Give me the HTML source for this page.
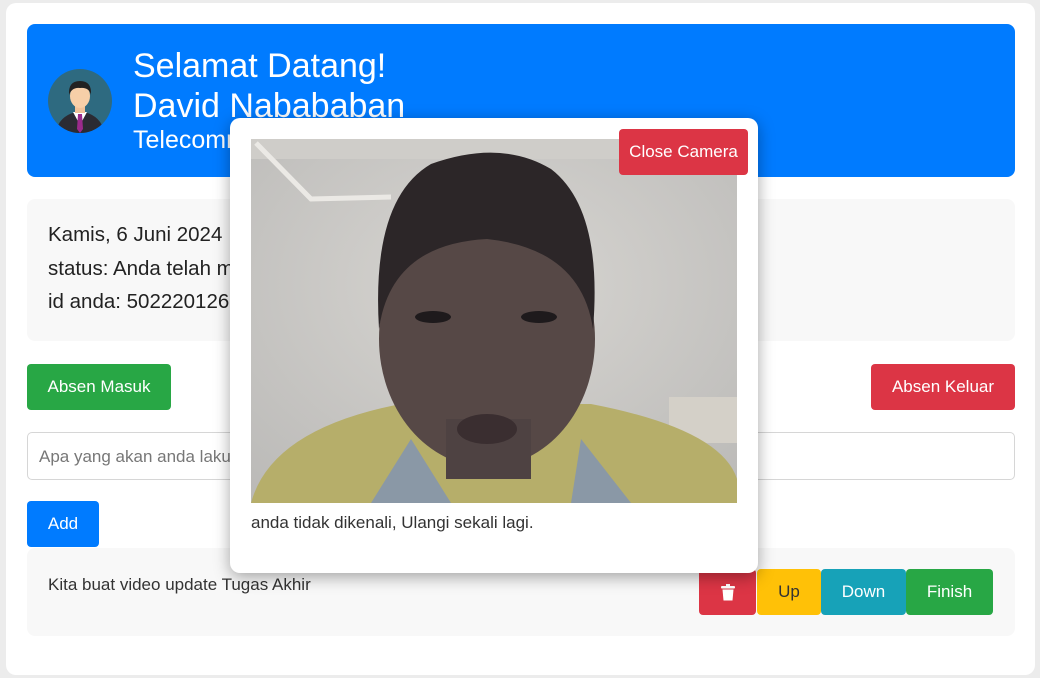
<!DOCTYPE html>
<html><head><meta charset="utf-8"><style>
*{box-sizing:border-box;margin:0;padding:0}
body{width:1040px;height:678px;background:#ececec;font-family:"Liberation Sans",sans-serif;position:relative;overflow:hidden}
.a{position:absolute}
.card{left:6px;top:3px;width:1029px;height:672px;background:#fff;border-radius:10px}
.btn{position:absolute;color:#fff;font-size:17px;display:flex;align-items:center;justify-content:center;border-radius:4px}
</style></head><body>
<div class="a card"></div>
<div class="a" style="left:27px;top:24px;width:988px;height:153px;background:#007bff;border-radius:8px"></div>
<svg class="a" style="left:48px;top:69px" width="64" height="64" viewBox="0 0 64 64">
<defs><clipPath id="c"><circle cx="32" cy="32" r="32"/></clipPath></defs>
<circle cx="32" cy="32" r="32" fill="#2e6a80"/>
<g clip-path="url(#c)">
<path d="M8 64 Q10 46 32 42 Q54 46 56 64Z" fill="#2b2b33"/>
<path d="M25 43 L32 56 L39 43Z" fill="#fff"/>
<path d="M30 45 L34 45 L35 60 L32 64 L29 60Z" fill="#9b2a8c"/>
<rect x="27" y="34" width="10" height="10" fill="#f0c29a"/>
<ellipse cx="32" cy="27" rx="10" ry="12" fill="#f7cfa8"/>
<path d="M21 26 Q20 12 32 12 Q44 12 43 26 Q41 18 32 19 Q24 18 21 26Z" fill="#222"/>
</g></svg>
<div class="a" style="left:133px;top:46px;color:#fff;font-size:34px;line-height:40px">Selamat Datang!<br>David Nabababan</div>
<div class="a" style="left:133px;top:126px;color:#fff;font-size:25px">Telecommunication</div>
<div class="a" style="left:27px;top:199px;width:988px;height:142px;background:#f8f8f8;border-radius:8px"></div>
<div class="a" style="left:48px;top:218px;font-size:20.5px;line-height:33.5px;color:#222">Kamis, 6 Juni 2024<br>status: Anda telah masuk<br>id anda: 5022201260000</div>
<div class="btn" style="left:27px;top:364px;width:144px;height:46px;background:#28a745">Absen Masuk</div>
<div class="btn" style="left:871px;top:364px;width:144px;height:46px;background:#dc3545">Absen Keluar</div>
<div class="a" style="left:27px;top:432px;width:988px;height:48px;border:1px solid #d6d6d6;border-radius:5px;font-size:17px;color:#777;padding:14px 11px">Apa yang akan anda lakukan hari ini?</div>
<div class="btn" style="left:27px;top:501px;width:72px;height:46px;background:#007bff">Add</div>
<div class="a" style="left:27px;top:548px;width:988px;height:88px;background:#f8f8f8;border-radius:8px"></div>
<div class="a" style="left:48px;top:575px;font-size:17px;color:#333">Kita buat video update Tugas Akhir</div>
<div class="btn" style="left:699px;top:569px;width:57px;height:46px;background:#dc3545"><svg width="14" height="17" viewBox="0 0 14 17"><rect x="0" y="2" width="14" height="2.5" rx="1" fill="#fff"/><rect x="5" y="0" width="4" height="3" fill="#fff"/><path d="M1.5 5.5H12.5L11.5 16.5H2.5Z" fill="#fff"/></svg></div>
<div class="btn" style="left:757px;top:569px;width:64px;height:46px;background:#ffc107;color:#333">Up</div>
<div class="btn" style="left:821px;top:569px;width:85px;height:46px;background:#17a2b8">Down</div>
<div class="btn" style="left:906px;top:569px;width:87px;height:46px;background:#28a745">Finish</div>
<div class="a" style="left:230px;top:118px;width:528px;height:455px;background:#fff;border-radius:10px;box-shadow:0 4px 16px rgba(0,0,0,.35)"></div>
<svg class="a" style="left:251px;top:139px" width="486" height="364" viewBox="0 0 486 364">
<defs><radialGradient id="w" cx="0.5" cy="0.4" r="0.8"><stop offset="0" stop-color="#d8d6d2"/><stop offset="1" stop-color="#b9b8b6"/></radialGradient></defs>
<rect width="486" height="364" fill="url(#w)"/>
<path d="M0 0H486V20H0Z" fill="#cfcdc9"/>
<path d="M5 4 L60 60 L140 58" stroke="#ebe9e5" stroke-width="5" fill="none"/>
<rect x="418" y="258" width="68" height="46" fill="#d4d0c8"/>
<path d="M0 364 Q20 290 150 265 L340 265 Q470 290 486 340 L486 364Z" fill="#b6ae6a"/>
<path d="M120 364 L160 300 L200 364Z" fill="#8a98a6"/>
<path d="M320 364 L330 300 L380 364Z" fill="#8a98a6"/>
<ellipse cx="236" cy="200" rx="108" ry="128" fill="#564846"/>
<rect x="195" y="280" width="85" height="60" fill="#4e4242"/>
<path d="M128 190 Q120 60 180 25 Q250 0 300 30 Q352 70 342 190 Q330 110 236 100 Q140 105 128 190Z" fill="#2c2628"/>
<ellipse cx="182" cy="178" rx="18" ry="6" fill="#1e1a1c"/>
<ellipse cx="288" cy="178" rx="18" ry="6" fill="#1e1a1c"/>
<ellipse cx="236" cy="290" rx="30" ry="15" fill="#3a2e30"/>
</svg>
<div class="btn" style="left:619px;top:129px;width:129px;height:46px;background:#dc3545">Close Camera</div>
<div class="a" style="left:251px;top:513px;font-size:17px;color:#333">anda tidak dikenali, Ulangi sekali lagi.</div>
</body></html>
